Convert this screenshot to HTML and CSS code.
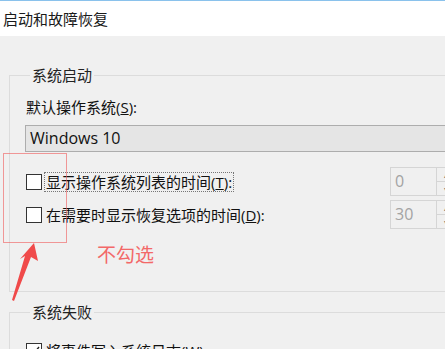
FILE: index.html
```html
<!DOCTYPE html>
<html lang="zh-CN">
<head>
    <meta charset="UTF-8">
    <meta name="viewport" content="width=device-width, initial-scale=1.0">
    <title>启动和故障恢复</title>
    <link rel="stylesheet" href="styles.css">
</head>
<body>
    <div class="titlebar">启动和故障恢复</div>
    <div class="content">
        <fieldset class="group startup">
            <legend>系统启动</legend>
            <div class="field-label">默认操作系统(<u>S</u>):</div>
            <div class="select">Windows 10</div>
            <div class="row first">
                <span class="checkbox"></span>
                <span class="label focused">显示操作系统列表的时间(<u>T</u>):</span>
                <span class="spinner">
                    <span class="spin-value">0</span>
                    <span class="spin-buttons"><span>&#9652;</span><span>&#9662;</span></span>
                </span>
            </div>
            <div class="row">
                <span class="checkbox"></span>
                <span class="label">在需要时显示恢复选项的时间(<u>D</u>):</span>
                <span class="spinner">
                    <span class="spin-value">30</span>
                    <span class="spin-buttons"><span>&#9652;</span><span>&#9662;</span></span>
                </span>
            </div>
        </fieldset>
        <fieldset class="group failure">
            <legend>系统失败</legend>
            <div class="row">
                <span class="checkbox">
                    <svg width="14" height="14" viewBox="0 0 14 14"><path d="M2 7.5 L5.5 11 L12 3" fill="none" stroke="#222" stroke-width="1.4"/></svg>
                </span>
                <span class="label">将事件写入系统日志(<u>W</u>)</span>
            </div>
        </fieldset>
    </div>

    <!-- 标注 -->
    <div class="note-box"></div>
    <svg class="note-arrow" width="445" height="349" viewBox="0 0 445 349">
        <polygon points="34,243 38,261 31,257 14,301 12,300 25,256 20,259" fill="#f04a4a"/>
    </svg>
    <div class="note-text">不勾选</div>
</body>
</html>
```

FILE: styles.css
```css
/* 对话框基础样式 */
body {
    margin: 0;
    width: 445px;
    height: 349px;
    overflow: hidden;
    position: relative;
    background-color: #f0f0f0;
    font-family: "Open Sans", "Noto Sans CJK SC", sans-serif;
    font-size: 15px;
    color: #111;
}
.titlebar {
    height: 35px;
    line-height: 36px;
    border-top: 1px solid #8ac2ec;
    background-color: #fff;
    padding-left: 3px;
    color: #1a1a1a;
}
.content {
    padding-top: 31px;
}
.group {
    box-sizing: border-box;
    width: 463px;
    margin: 0 0 0 9px;
    border: 1px solid #dcdcdc;
    padding: 14px 16px 62px;
}
.group legend {
    margin-left: 4px;
    padding: 0 2px;
    line-height: 16px;
    color: #222;
}
.failure {
    margin-top: 12px;
    padding-top: 12px;
}
.field-label {
    line-height: 20px;
}
.select {
    margin-top: 8px;
    margin-left: -1px;
    height: 25px;
    line-height: 25px;
    border: 1px solid #adadad;
    background-color: #e5e5e5;
    padding-left: 4px;
    font-size: 16px;
}
.row {
    display: flex;
    align-items: center;
    height: 29px;
    margin-top: 4px;
}
.row.first {
    margin-top: 15px;
}
.checkbox {
    box-sizing: border-box;
    width: 16px;
    height: 16px;
    border: 1px solid #333;
    background-color: #fff;
    display: flex;
    align-items: center;
    justify-content: center;
}
.label {
    margin-left: 2px;
    padding: 0 1px;
    line-height: 18px;
    border: 1px solid transparent;
    white-space: nowrap;
}
.label.focused {
    border: 1px dotted #777;
}
.spinner {
    margin-left: auto;
    display: flex;
    height: 29px;
}
.spin-value {
    box-sizing: border-box;
    width: 47px;
    border: 1px solid #d5d5d5;
    padding-left: 4px;
    line-height: 26px;
    font-size: 16px;
    color: #a3a3a3;
}
.spin-buttons {
    box-sizing: border-box;
    width: 18px;
    display: flex;
    flex-direction: column;
    border: 1px solid #d5d5d5;
    border-left: none;
}
.spin-buttons span {
    flex: 1;
    font-size: 8px;
    line-height: 13px;
    text-align: center;
    color: #777;
}
.spin-buttons span + span {
    border-top: 1px solid #d5d5d5;
}

/* 红色标注 */
.note-box {
    position: absolute;
    left: 3px;
    top: 153px;
    width: 62px;
    height: 88px;
    border: 1.5px solid rgba(240, 90, 90, 0.6);
}
.note-arrow {
    position: absolute;
    left: 0;
    top: 0;
}
.note-text {
    position: absolute;
    left: 97px;
    top: 243px;
    font-size: 19px;
    line-height: 22px;
    color: #f36868;
    font-family: "Noto Sans CJK SC", sans-serif;
}
```
